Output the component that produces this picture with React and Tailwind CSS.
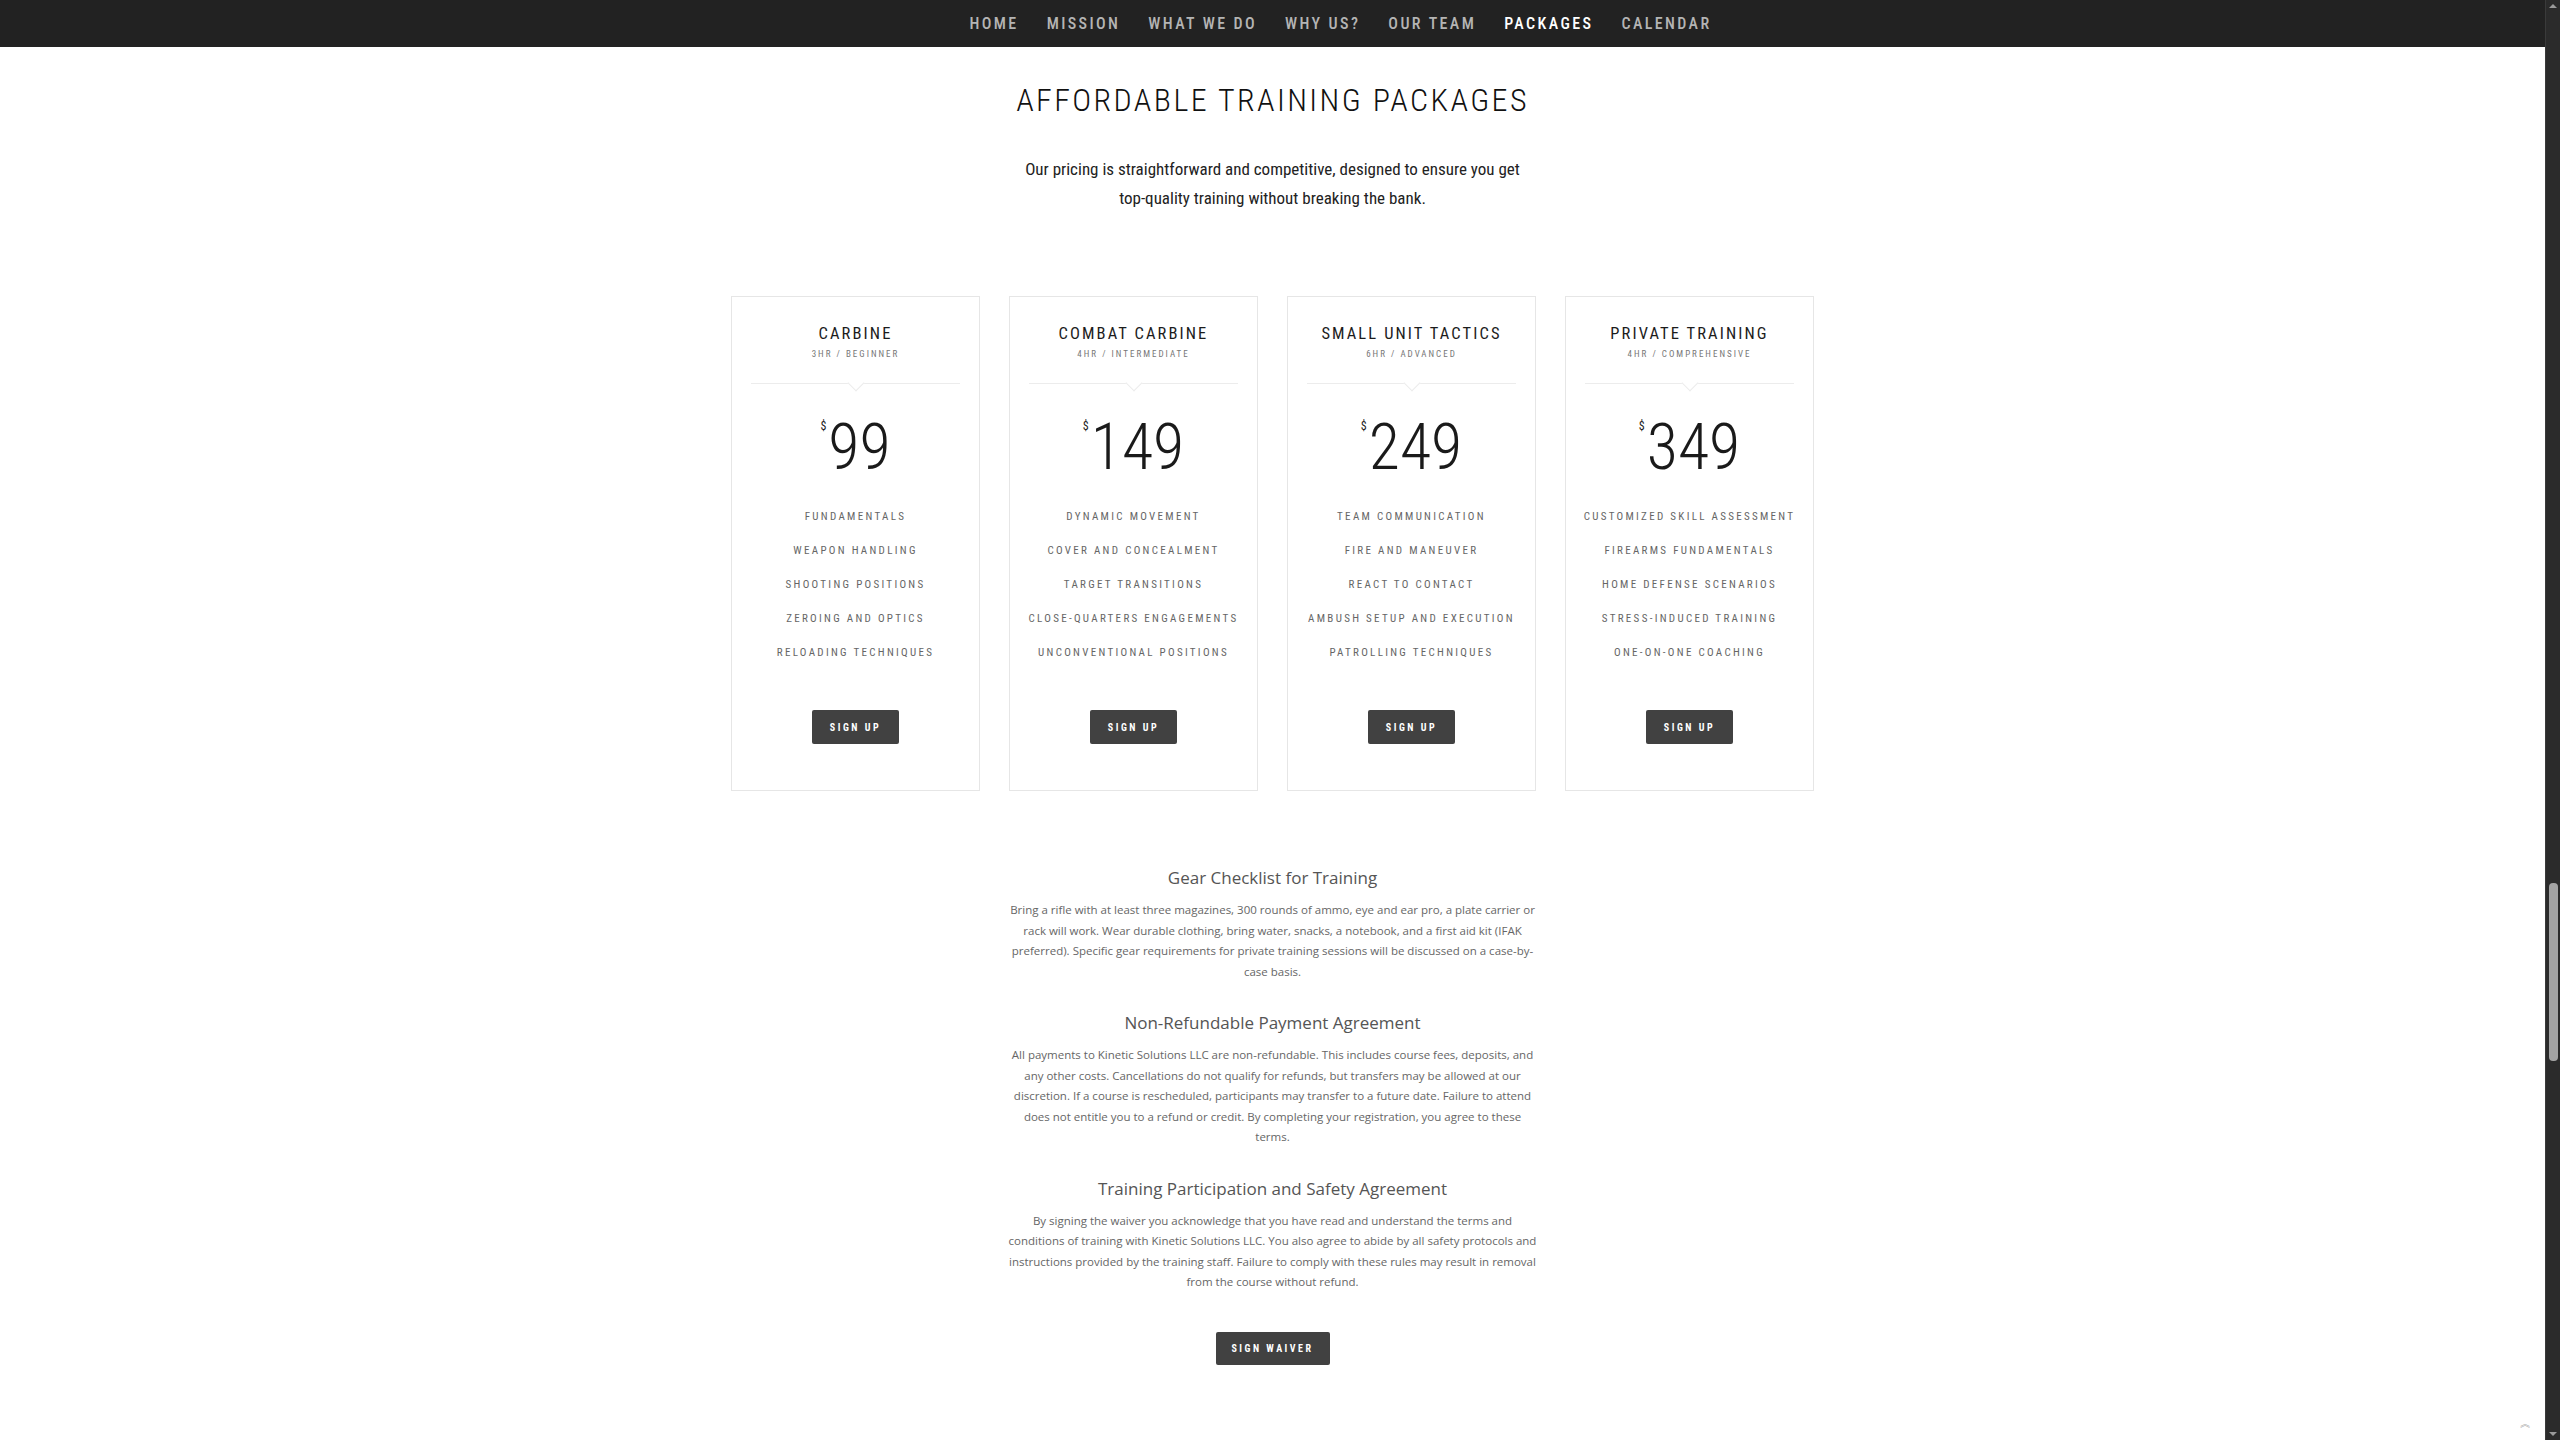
import React from 'react';

const cond = { fontFamily: '"Roboto Condensed", "Liberation Sans Narrow", Roboto, sans-serif', fontStretch: 'condensed' };

const NAV = ['Home', 'Mission', 'What we do', 'Why us?', 'Our team', 'Packages', 'Calendar'];

const PACKAGES = [
  {
    name: 'Carbine',
    meta: '3hr / beginner',
    price: 99,
    items: ['Fundamentals', 'Weapon handling', 'Shooting positions', 'Zeroing and optics', 'Reloading techniques'],
  },
  {
    name: 'Combat Carbine',
    meta: '4hr / intermediate',
    price: 149,
    items: ['Dynamic movement', 'Cover and concealment', 'Target transitions', 'Close-quarters engagements', 'Unconventional positions'],
  },
  {
    name: 'Small Unit Tactics',
    meta: '6hr / advanced',
    price: 249,
    items: ['Team communication', 'Fire and maneuver', 'React to contact', 'Ambush setup and execution', 'Patrolling techniques'],
  },
  {
    name: 'Private Training',
    meta: '4hr / comprehensive',
    price: 349,
    items: ['Customized skill assessment', 'Firearms fundamentals', 'Home defense scenarios', 'Stress-induced training', 'One-on-one coaching'],
  },
];

const TERMS = [
  {
    title: 'Gear Checklist for Training',
    body: 'Bring a rifle with at least three magazines, 300 rounds of ammo, eye and ear pro, a plate carrier or rack will work. Wear durable clothing, bring water, snacks, a notebook, and a first aid kit (IFAK preferred). Specific gear requirements for private training sessions will be discussed on a case-by-case basis.',
  },
  {
    title: 'Non-Refundable Payment Agreement',
    body: 'All payments to Kinetic Solutions LLC are non-refundable. This includes course fees, deposits, and any other costs. Cancellations do not qualify for refunds, but transfers may be allowed at our discretion. If a course is rescheduled, participants may transfer to a future date. Failure to attend does not entitle you to a refund or credit. By completing your registration, you agree to these terms.',
  },
  {
    title: 'Training Participation and Safety Agreement',
    body: 'By signing the waiver you acknowledge that you have read and understand the terms and conditions of training with Kinetic Solutions LLC. You also agree to abide by all safety protocols and instructions provided by the training staff. Failure to comply with these rules may result in removal from the course without refund.',
  },
];

function DarkButton({ children, className }) {
  return (
    <button
      type="button"
      style={cond}
      className={`rounded-[2px] bg-[#414141] text-[10px] font-bold uppercase tracking-[2.5px] text-white ${className}`}
    >
      {children}
    </button>
  );
}

function PackageCard({ pkg }) {
  return (
    <div className="flex h-[495px] w-[249px] flex-col items-center border border-[#e6e6e6] bg-white pt-[27px]" style={cond}>
      <div className="text-[16.5px] uppercase leading-[20px] tracking-[2.1px] text-[#1c1c1c]">{pkg.name}</div>
      <div className="mt-[3px] text-[9px] uppercase leading-[14px] tracking-[2px] text-[#777]">{pkg.meta}</div>

      {/* divider with small notch */}
      <div className="relative mt-[22px] h-px w-[209px] bg-[#ececec]">
        <div className="absolute left-1/2 top-[-6px] h-[12px] w-[12px] -translate-x-1/2 rotate-45 border-b border-r border-[#ececec] bg-white" />
      </div>

      <div className="mt-[32px] flex items-start leading-none text-[#1a1a1a]">
        <span className="mt-[4px] mr-[2px] text-[12px]">$</span>
        <span className="text-[64px] font-light leading-[64px]">{pkg.price}</span>
      </div>

      <ul className="mt-[20px] flex flex-col items-center">
        {pkg.items.map((it) => (
          <li key={it} className="text-[11px] uppercase leading-[34px] tracking-[2.3px] text-[#666]">
            {it}
          </li>
        ))}
      </ul>

      <DarkButton className="mt-[40px] h-[34px] w-[87px]">Sign up</DarkButton>
    </div>
  );
}

export default function App() {
  return (
    <div className="flex h-[1440px] w-full overflow-hidden bg-white">
      <div className="relative flex-1">
        <nav className="flex h-[47px] items-center justify-center bg-[#222] pl-[136px]" style={cond}>
          {NAV.map((n) => (
            <a
              key={n}
              className={`px-[14px] text-[16px] font-medium uppercase tracking-[2.4px] ${
                n === 'Packages' ? 'font-bold text-white' : 'text-[#b4b4b4]'
              }`}
            >
              {n}
            </a>
          ))}
        </nav>

        <section className="flex flex-col items-center">
          <h1 className="mt-[33px] text-[32px] font-light uppercase leading-[40px] tracking-[2.4px] text-[#111]" style={cond}>
            Affordable Training Packages
          </h1>
          <p className="mt-[35px] w-[512px] text-center text-[17px] leading-[29px] text-[#222]" style={cond}>
            Our pricing is straightforward and competitive, designed to ensure you get top-quality training without breaking the bank.
          </p>

          <div className="mt-[83px] flex gap-[29px]">
            {PACKAGES.map((p) => (
              <PackageCard key={p.name} pkg={p} />
            ))}
          </div>

          <div className="mt-[74px] flex w-[534px] flex-col items-center" style={{ fontFamily: '"Open Sans", sans-serif' }}>
            {TERMS.map((t, i) => (
              <div key={t.title} className={`flex flex-col items-center ${i > 0 ? 'mt-[28px]' : ''}`}>
                <h3 className="text-[17px] leading-[26px] text-[#555]">{t.title}</h3>
                <p className="mt-[9px] text-center text-[11.5px] leading-[20.5px] text-[#666]">{t.body}</p>
              </div>
            ))}
            <DarkButton className="mt-[39px] h-[33px] w-[114px]">Sign waiver</DarkButton>
          </div>
        </section>

        <span className="absolute bottom-[12px] right-[14px] text-[11px] leading-none text-[#aaa]">︽</span>
      </div>

      {/* browser scrollbar */}
      <div className="flex w-[15px] flex-col items-center border-l border-[#3a3a3a] bg-[#2b2b2b]">
        <div className="mt-[4px] h-0 w-0 border-x-[4px] border-b-[4px] border-x-transparent border-b-[#9a9a9a]" />
        <div className="mt-[875px] h-[178px] w-[9px] rounded-[4px] bg-[#a3a3a3]" />
        <div className="mt-auto mb-[4px] h-0 w-0 border-x-[4px] border-t-[4px] border-x-transparent border-t-[#9a9a9a]" />
      </div>
    </div>
  );
}
